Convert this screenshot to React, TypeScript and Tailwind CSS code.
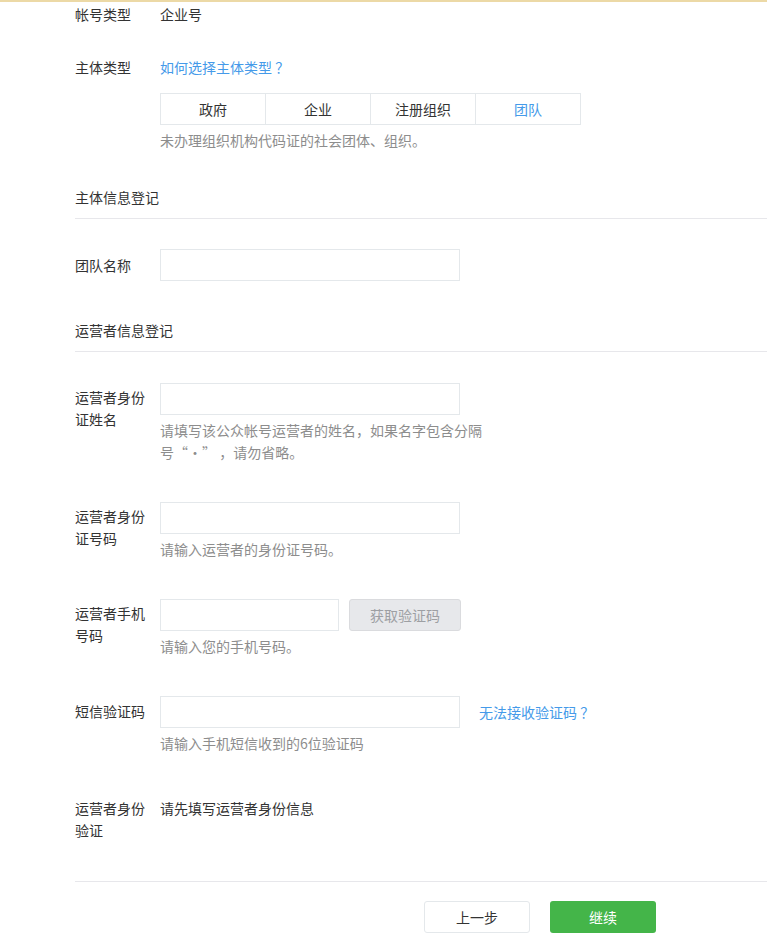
import React from 'react';

const FONT = { fontFamily: '"Noto Sans CJK SC", "Liberation Sans", sans-serif' };

function Label({ children }: { children: React.ReactNode }) {
  return <div className="w-[85px] shrink-0 pr-3 text-[14px] leading-[22px] text-[#333]">{children}</div>;
}

function Input({ w = 'w-[300px]' }: { w?: string }) {
  return <input className={`${w} h-[32px] border border-[#e4e8eb] bg-white px-2 outline-none`} />;
}

function Help({ children }: { children: React.ReactNode }) {
  return <p className="mt-[4px] w-[330px] text-[14px] leading-[22px] text-[#8d8d8d]">{children}</p>;
}

function Section({ title }: { title: string }) {
  return (
    <div className="border-b border-[#e7e7eb] pb-[10px] text-[14px] leading-[22px] text-[#333]">{title}</div>
  );
}

export default function App() {
  const types = ['政府', '企业', '注册组织', '团队'];
  return (
    <div lang="zh-CN" className="min-h-[949px] w-[767px] overflow-hidden bg-white" style={FONT}>
      <div className="h-[2px] bg-[#ecd9a6]" />
      <div className="w-[1000px] pl-[75px]">
        <div className="mt-[1px] flex text-[14px] leading-[22px]">
          <Label>帐号类型</Label>
          <span className="text-[#333]">企业号</span>
        </div>

        <div className="mt-[31px] flex text-[14px] leading-[22px]">
          <Label>主体类型</Label>
          <div>
            <a className="text-[#459ae9]">如何选择主体类型 ？</a>
            <div className="mt-[15px] flex h-[32px] w-[421px] border border-[#e4e8eb]">
              {types.map((t, i) => (
                <div
                  key={t}
                  className={`flex flex-1 items-center justify-center ${i > 0 ? 'border-l border-[#e4e8eb]' : ''} ${
                    t === '团队' ? 'text-[#459ae9]' : 'text-[#333]'
                  }`}
                >
                  {t}
                </div>
              ))}
            </div>
            <Help>未办理组织机构代码证的社会团体、组织。</Help>
          </div>
        </div>

        <div className="mt-[35px]">
          <Section title="主体信息登记" />
        </div>

        <div className="mt-[30px] flex items-center">
          <Label>团队名称</Label>
          <Input />
        </div>

        <div className="mt-[38px]">
          <Section title="运营者信息登记" />
        </div>

        <div className="mt-[31px] flex">
          <div className="pt-[3px]">
            <Label>运营者身份证姓名</Label>
          </div>
          <div>
            <Input />
            <Help>请填写该公众帐号运营者的姓名，如果名字包含分隔号“·” ，请勿省略。</Help>
          </div>
        </div>

        <div className="mt-[39px] flex">
          <div className="pt-[3px]">
            <Label>运营者身份证号码</Label>
          </div>
          <div>
            <Input />
            <Help>请输入运营者的身份证号码。</Help>
          </div>
        </div>

        <div className="mt-[39px] flex">
          <div className="pt-[3px]">
            <Label>运营者手机号码</Label>
          </div>
          <div>
            <div className="flex gap-[10px]">
              <Input w="w-[179px]" />
              <button className="h-[32px] w-[112px] rounded-[3px] border border-[#dadbde] bg-[#e7e8eb] text-[14px] text-[#9d9fa3]">
                获取验证码
              </button>
            </div>
            <Help>请输入您的手机号码。</Help>
          </div>
        </div>

        <div className="mt-[39px] flex">
          <div className="pt-[4px]">
            <Label>短信验证码</Label>
          </div>
          <div>
            <div className="flex items-center">
              <Input />
              <a className="ml-[19px] text-[14px] text-[#459ae9]">无法接收验证码 ？</a>
            </div>
            <Help>请输入手机短信收到的6位验证码</Help>
          </div>
        </div>

        <div className="mt-[43px] flex text-[14px] leading-[22px]">
          <Label>运营者身份验证</Label>
          <span className="text-[#333]">请先填写运营者身份信息</span>
        </div>

        <div className="mt-[40px] border-t border-[#e7e7eb]" />

        <div className="mt-[19px] flex gap-[20px] pl-[349px]">
          <button className="h-[32px] w-[106px] rounded-[3px] border border-[#e4e8eb] bg-white text-[14px] text-[#333]">
            上一步
          </button>
          <button className="h-[32px] w-[106px] rounded-[3px] bg-[#44b549] text-[14px] text-white">继续</button>
        </div>
      </div>
    </div>
  );
}
